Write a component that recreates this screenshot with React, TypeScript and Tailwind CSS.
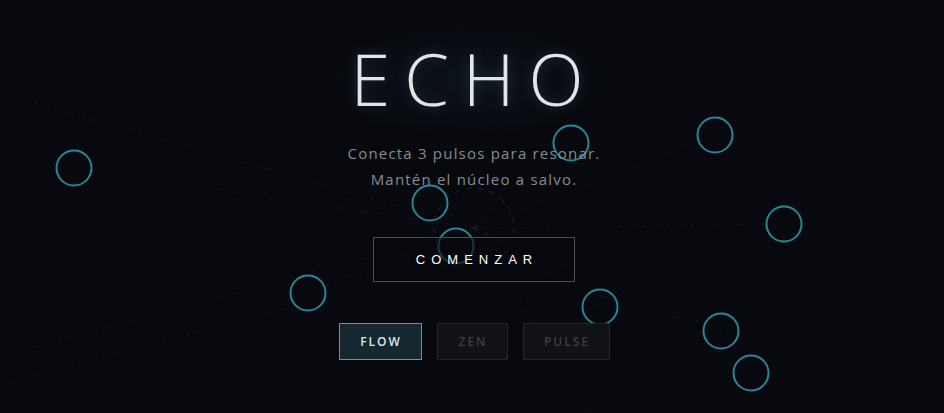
import React from "react";

const CX = 474;
const CY = 228;

const nodes: [number, number][] = [
  [74, 168],
  [308, 293],
  [430, 203],
  [456, 246],
  [571, 143],
  [715, 135],
  [784, 224],
  [600, 307],
  [721, 331],
  [751, 373],
];

const extraLines: [number, number, number, number][] = [
  [0, 93, CX, CY],
  [0, 357, CX, CY],
  [0, 386, 456, 262],
  [CX, CY, 592, 413],
];

function Background() {
  return (
    <svg
      className="absolute inset-0 h-full w-full"
      width="944"
      height="413"
      viewBox="0 0 944 413"
    >
      <defs>
        <pattern id="grid" width="24" height="24" patternUnits="userSpaceOnUse">
          <path d="M24 0 L0 0 0 24" fill="none" stroke="rgba(255,255,255,0.007)" strokeWidth="1" />
        </pattern>
        <radialGradient id="glow" cx="50%" cy="50%" r="50%">
          <stop offset="0%" stopColor="rgba(40,70,90,0.16)" />
          <stop offset="100%" stopColor="rgba(40,70,90,0)" />
        </radialGradient>
      </defs>
      <rect width="944" height="413" fill="url(#grid)" />
      <ellipse cx="468" cy="80" rx="150" ry="60" fill="url(#glow)" />
      {nodes.map(([x, y], i) => (
        <line
          key={"l" + i}
          x1={CX}
          y1={CY}
          x2={x}
          y2={y}
          stroke="rgba(130,140,150,0.08)"
          strokeWidth="1.2"
          strokeDasharray="5 7"
        />
      ))}
      {extraLines.map(([a, b, c, d], i) => (
        <line
          key={"e" + i}
          x1={a}
          y1={b}
          x2={c}
          y2={d}
          stroke="rgba(130,140,150,0.065)"
          strokeWidth="1.2"
          strokeDasharray="5 7"
        />
      ))}
      <circle
        cx={CX}
        cy={CY}
        r="40"
        fill="none"
        stroke="rgba(160,170,180,0.13)"
        strokeWidth="1.2"
        strokeDasharray="6 6"
      />
      {nodes.map(([x, y], i) => (
        <circle
          key={"n" + i}
          cx={x}
          cy={y}
          r="17.5"
          fill="none"
          stroke="#2b8597"
          strokeWidth="2"
        />
      ))}
    </svg>
  );
}

export default function App() {
  return (
    <div
      className="relative h-[413px] w-[944px] overflow-hidden bg-[#07090e]"
      style={{ fontFamily: '"Open Sans", "Noto Sans", sans-serif' }}
    >
      <Background />
      <div className="relative flex flex-col items-center pl-[4px] pt-[42px]">
        <h1 className="mr-[14px] pl-[14px] text-[72px] font-light leading-none tracking-[14px] text-[#e2e4e7] [text-shadow:0_0_14px_rgba(120,170,200,0.28)]">
          ECHO
        </h1>
        <p className="mt-[26px] text-center text-[15px] leading-[26px] tracking-[1.2px] text-[#868b92]">
          Conecta 3 pulsos para resonar.
          <br />
          Mantén el núcleo a salvo.
        </p>
        <button
          className="mt-[45px] flex h-[45px] w-[202px] items-center justify-center border border-[#4a4e54] bg-[#07090e]/60 pl-[6px] text-[13px] font-medium tracking-[6px] text-white"
          style={{ fontFamily: '"Liberation Sans", Arial, sans-serif' }}
        >
          COMENZAR
        </button>
        <div className="mt-[41px] flex gap-[15px]">
          <button className="flex h-[37px] w-[83px] items-center justify-center border border-[#3aa6ba] bg-[#152830] pl-[2px] text-[12px] font-semibold tracking-[2px] text-[#dde6ea]">
            FLOW
          </button>
          <button className="flex h-[37px] w-[71px] items-center justify-center border border-[#23262b] bg-[#101216] pl-[2px] text-[12px] font-semibold tracking-[2px] text-[#3b3f45]">
            ZEN
          </button>
          <button className="flex h-[37px] w-[87px] items-center justify-center border border-[#23262b] bg-[#101216] pl-[2px] text-[12px] font-semibold tracking-[2px] text-[#3b3f45]">
            PULSE
          </button>
        </div>
      </div>
    </div>
  );
}
